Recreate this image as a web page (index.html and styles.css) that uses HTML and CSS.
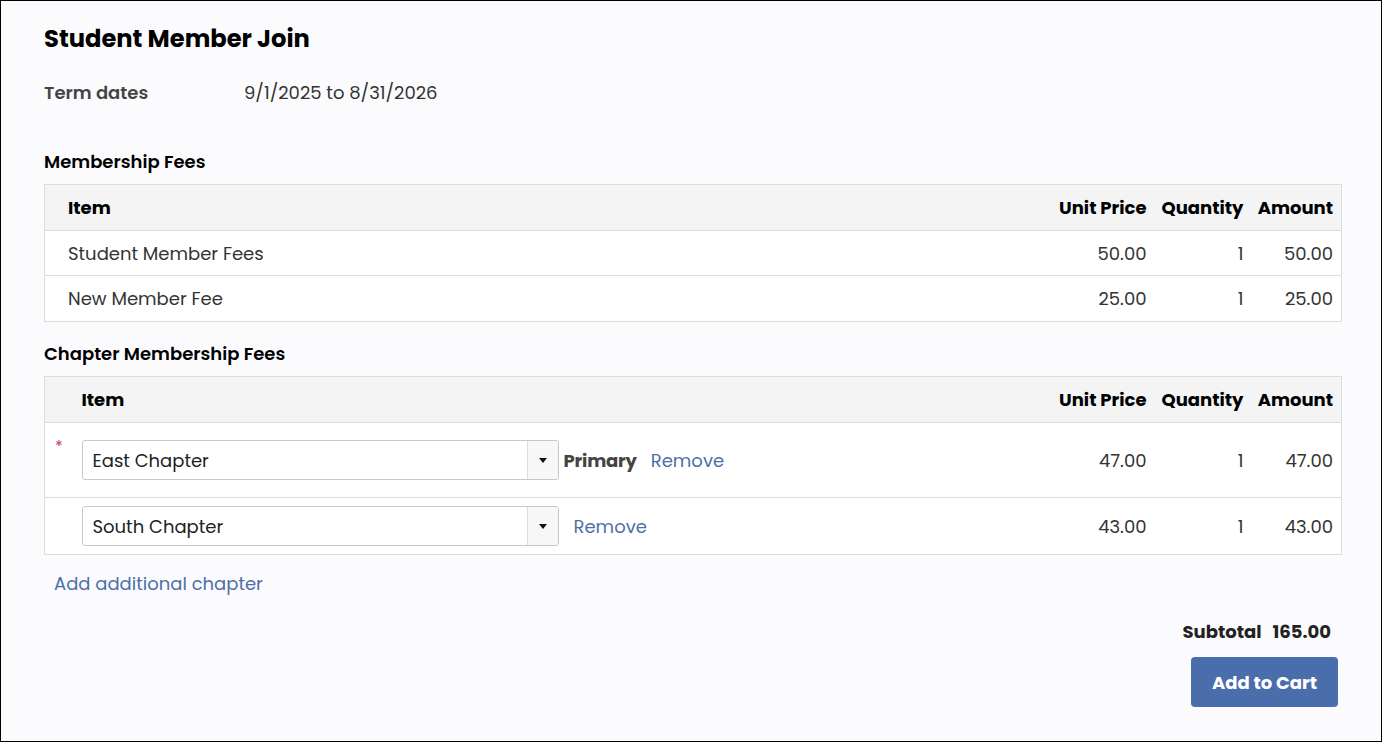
FILE: index.html
```html
<!DOCTYPE html>
<html>
<head>
<meta charset="utf-8">
<link rel="stylesheet" href="styles.css">
</head>
<body>
<div class="page">
  <h1 class="title">Student Member Join</h1>
  <div class="term">
    <span class="term-label">Term dates</span>
    <span class="term-value">9/1/2025 to 8/31/2026</span>
  </div>

  <h2 class="section">Membership Fees</h2>
  <table class="fees">
    <thead>
      <tr>
        <th class="c-item">Item</th>
        <th class="c-num c-price">Unit Price</th>
        <th class="c-num c-qty">Quantity</th>
        <th class="c-num c-amt">Amount</th>
      </tr>
    </thead>
    <tbody>
      <tr>
        <td class="c-item">Student Member Fees</td>
        <td class="c-num c-price">50.00</td>
        <td class="c-num c-qty">1</td>
        <td class="c-num c-amt">50.00</td>
      </tr>
      <tr class="row-last">
        <td class="c-item">New Member Fee</td>
        <td class="c-num c-price">25.00</td>
        <td class="c-num c-qty">1</td>
        <td class="c-num c-amt">25.00</td>
      </tr>
    </tbody>
  </table>

  <h2 class="section section-2">Chapter Membership Fees</h2>
  <table class="fees chapters">
    <thead>
      <tr>
        <th class="c-req"></th>
        <th class="c-item c-item2">Item</th>
        <th class="c-num c-price">Unit Price</th>
        <th class="c-num c-qty">Quantity</th>
        <th class="c-num c-amt">Amount</th>
      </tr>
    </thead>
    <tbody>
      <tr class="row-primary">
        <td class="c-req"><span class="req">*</span></td>
        <td class="c-item c-item2">
          <div class="chapter-line">
            <div class="select">
              <span class="select-text">East Chapter</span>
              <span class="select-btn"><span class="caret"></span></span>
            </div>
            <span class="primary">Primary</span>
            <a class="link remove">Remove</a>
          </div>
        </td>
        <td class="c-num c-price">47.00</td>
        <td class="c-num c-qty">1</td>
        <td class="c-num c-amt">47.00</td>
      </tr>
      <tr class="row-second">
        <td class="c-req"></td>
        <td class="c-item c-item2">
          <div class="chapter-line">
            <div class="select">
              <span class="select-text">South Chapter</span>
              <span class="select-btn"><span class="caret"></span></span>
            </div>
            <a class="link remove remove-2">Remove</a>
          </div>
        </td>
        <td class="c-num c-price">43.00</td>
        <td class="c-num c-qty">1</td>
        <td class="c-num c-amt">43.00</td>
      </tr>
    </tbody>
  </table>

  <a class="link add-chapter">Add additional chapter</a>

  <div class="footer">
    <div class="subtotal"><span>Subtotal</span><span class="subtotal-val">165.00</span></div>
    <button class="cart-btn">Add to Cart</button>
  </div>
</div>
</body>
</html>
```

FILE: styles.css
```css
* { box-sizing: border-box; }
html, body { margin: 0; padding: 0; }
body {
  font-family: "Poppins", "Open Sans", "Noto Sans", sans-serif;
  color: #333;
  background: #fbfbfe;
}
.page {
  width: 1382px;
  height: 742px;
  border: 1px solid #000;
  background: #fbfbfe;
  padding: 22px 40px 0 43px;
}
.title {
  margin: 0;
  font-size: 24.2px;
  font-weight: 700;
  color: #000;
  line-height: 32px;
}
.term {
  display: flex;
  margin-top: 26px;
  font-size: 18px;
  line-height: 24px;
}
.term-label {
  width: 200px;
  font-weight: 600;
  color: #444;
}
.term-value { color: #333; }
.section {
  margin: 45px 0 0;
  font-size: 18px;
  font-weight: 600;
  color: #000;
  line-height: 24px;
}
.section-2 { margin-top: 20px; }
.fees {
  width: 1298px;
  margin-top: 10px;
  border-collapse: collapse;
  border: 1px solid #dcdcdc;
  background: #fff;
  font-size: 18px;
}
.fees th {
  background: #f4f4f4;
  color: #000;
  font-weight: 700;
  height: 46px;
  padding: 0 8px;
  text-align: left;
  white-space: nowrap;
}
.fees td {
  height: 45px;
  padding: 0 8px;
  border-top: 1px solid #dcdcdc;
  color: #333;
}
.fees .row-last td { height: 46px; }
.fees .c-item { padding-left: 23px; }
.fees .c-num { text-align: right; white-space: nowrap; }
.fees .c-price { width: 120px; padding-right: 9px; }
.fees .c-qty { width: 96px; padding-left: 4px; }
.fees .c-amt { width: 90px; padding-left: 6px; }
.chapters .c-req { width: 36px; padding: 0 0 0 10px; vertical-align: top; }
.chapters .c-item2 { padding-left: 1px; }
.req { display: block; color: #c23b63; font-size: 16px; line-height: 16px; margin-top: 16px; }
.row-primary td { height: 75px; }
.row-second td { height: 57px; }
.chapter-line {
  display: flex;
  align-items: center;
}
.select {
  width: 477px;
  height: 40px;
  border: 1px solid #c8c8c8;
  border-radius: 3px;
  background: #fff;
  display: flex;
  align-items: center;
  justify-content: space-between;
}
.select-text {
  padding-left: 10px;
  font-size: 18px;
  color: #222;
}
.select-btn {
  width: 31px;
  height: 100%;
  border-left: 1px solid #ddd;
  background: #f7f7f7;
  display: flex;
  align-items: center;
  justify-content: center;
  border-radius: 0 3px 3px 0;
}
.caret {
  width: 0; height: 0;
  border-left: 4px solid transparent;
  border-right: 4px solid transparent;
  border-top: 5px solid #111;
}
.primary {
  margin-left: 5px;
  font-weight: 700;
  color: #444;
  font-size: 18px;
  letter-spacing: -0.2px;
}
.link {
  color: #4d6fa8;
  text-decoration: none;
  cursor: pointer;
}
.remove { margin-left: 14px; font-size: 18px; }
.remove-2 { margin-left: 15px; }
.add-chapter {
  display: block;
  margin: 17px 0 0 10px;
  font-size: 18px;
  line-height: 24px;
}
.footer {
  display: flex;
  flex-direction: column;
  align-items: flex-end;
  margin-right: 3px;
}
.subtotal {
  margin-top: 24px;
  margin-right: 7px;
  font-weight: 700;
  font-size: 18px;
  color: #222;
  line-height: 24px;
}
.subtotal-val { margin-left: 11px; }
.cart-btn {
  margin-top: 13px;
  width: 147px;
  height: 50px;
  background: #4a6dab;
  color: #fff;
  border: none;
  border-radius: 4px;
  font-family: inherit;
  font-size: 18px;
  font-weight: 700;
}
```
